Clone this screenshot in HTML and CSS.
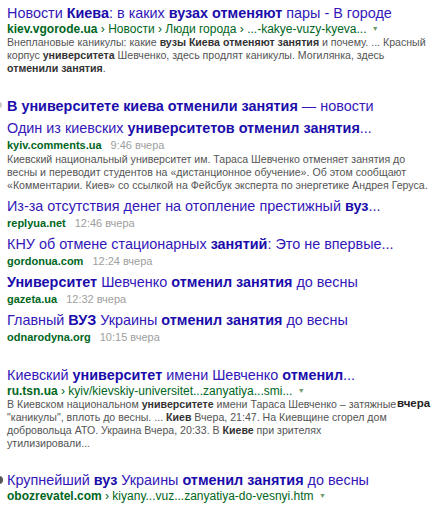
FILE: index.html
```html
<!DOCTYPE html>
<html lang="ru">
<head>
<meta charset="utf-8">
<link rel="stylesheet" href="styles.css">
</head>
<body>
<div class="page">
  <div class="result first">
    <div class="title"><a>Новости <b>Киева</b>: в каких <b>вузах отменяют</b> пары - В городе</a></div>
    <div class="url"><b>kiev.vgorode.ua</b> › Новости › Люди города › ...-kakye-vuzy-kyeva... <span class="arrow">▼</span></div>
    <div class="snippet">Внеплановые каникулы: какие <b>вузы Киева отменяют занятия</b> и почему. ... Красный<br>корпус <b>университета</b> Шевченко, здесь продлят каникулы. Могилянка, здесь<br><b>отменили занятия</b>.</div>
  </div>

  <div class="news">
    <div class="news-head"><a><b>В университете киева отменили занятия</b> — новости</a></div>
    <div class="item">
      <div class="title"><a>Один из киевских <b>университетов отменил занятия</b>...</a></div>
      <div class="source"><b>kyiv.comments.ua</b><span class="time">9:46 вчера</span></div>
      <div class="snippet">Киевский национальный университет им. Тараса Шевченко отменяет занятия до<br>весны и переводит студентов на «дистанционное обучение». Об этом сообщают<br>«Комментарии. Киев» со ссылкой на Фейсбук эксперта по энергетике Андрея Геруса.</div>
    </div>
    <div class="item">
      <div class="title"><a>Из-за отсутствия денег на отопление престижный <b>вуз</b>...</a></div>
      <div class="source"><b>replyua.net</b><span class="time">12:46 вчера</span></div>
    </div>
    <div class="item">
      <div class="title"><a>КНУ об отмене стационарных <b>занятий</b>: Это не впервые...</a></div>
      <div class="source"><b>gordonua.com</b><span class="time">12:24 вчера</span></div>
    </div>
    <div class="item">
      <div class="title"><a><b>Университет</b> Шевченко <b>отменил занятия</b> до весны</a></div>
      <div class="source"><b>gazeta.ua</b><span class="time">12:32 вчера</span></div>
    </div>
    <div class="item">
      <div class="title"><a>Главный <b>ВУЗ</b> Украины <b>отменил занятия</b> до весны</a></div>
      <div class="source"><b>odnarodyna.org</b><span class="time">10:15 вчера</span></div>
    </div>
  </div>

  <div class="result">
    <div class="title"><a>Киевский <b>университет</b> имени Шевченко <b>отменил</b>...</a></div>
    <div class="url"><b>ru.tsn.ua</b> › kyiv/kievskiy-universitet...zanyatiya...smi... <span class="arrow">▼</span></div>
    <div class="row">
      <div class="snippet">В Киевском национальном <b>университете</b> имени Тараса Шевченко – затяжные<br>"каникулы", вплоть до весны. ... <b>Киев</b> Вчера, 21:47. На Киевщине сгорел дом<br>добровольца АТО. Украина Вчера, 20:33. В <b>Киеве</b> при зрителях<br>утилизировали...</div>
      <div class="side"><b>вчера</b></div>
    </div>
  </div>

  <div class="result last">
    <div class="title"><a>Крупнейший <b>вуз</b> Украины <b>отменил занятия</b> до весны</a></div>
    <div class="url"><b>obozrevatel.com</b> › kiyany...vuz...zanyatiya-do-vesnyi.htm <span class="arrow">▼</span></div>
  </div>
</div>
</body>
</html>
```

FILE: styles.css
```css
html, body {
  margin: 0;
  padding: 0;
  background: #ffffff;
}
body {
  font-family: "Liberation Sans", Arial, sans-serif;
  color: #545454;
  overflow: hidden;
}
.page {
  padding: 4px 0 0 7px;
  width: 440px;
}
.title, .news-head {
  font-size: 14.4px;
  line-height: 18px;
  white-space: nowrap;
}
.title a, .news-head a {
  color: #3317b9;
}
.title b, .news-head b {
  color: #1a0dab;
}
.url {
  font-size: 12px;
  line-height: 14px;
  color: #006621;
  white-space: nowrap;
}
.arrow {
  font-size: 7px;
  color: #6a9a6a;
  vertical-align: 2px;
  margin-left: 2px;
}
.snippet {
  font-size: 10.6px;
  line-height: 13px;
  color: #545454;
  white-space: nowrap;
}
.snippet b {
  color: #333333;
}
.news {
  margin-top: 22px;
  position: relative;
}
.news::before {
  content: "";
  position: absolute;
  left: -11px;
  top: 5px;
  width: 6px;
  height: 6px;
  border-radius: 50%;
  background: #c8c8c8;
}
.item {
  margin-top: 5px;
}
.news-head + .item {
  margin-top: 4px;
}
.source {
  font-size: 11px;
  line-height: 13px;
  color: #006621;
  white-space: nowrap;
  margin-top: 2px;
}
.time {
  font-size: 11px;
  color: #9e9e9e;
  margin-left: 9px;
}
.item .snippet {
  margin-top: 1px;
  margin-bottom: 1px;
}
.result {
  margin-top: 22px;
}
.result.first {
  margin-top: 0;
}
.row {
  display: flex;
  align-items: flex-start;
}
.row .snippet {
  width: 390px;
  flex: none;
}
.side {
  font-size: 11.5px;
  line-height: 13px;
  color: #222222;
  margin-top: -1px;
}
.last {
  position: relative;
  margin-top: 21px;
}
.last::before {
  content: "";
  position: absolute;
  left: -12px;
  top: 5px;
  width: 8px;
  height: 8px;
  border-radius: 50%;
  background: #555555;
}
```
